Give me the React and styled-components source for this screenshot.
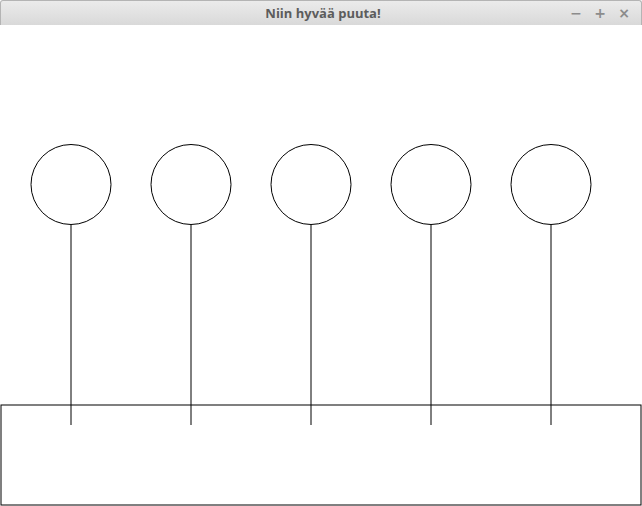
import React from 'react';
import styled, { createGlobalStyle } from 'styled-components';

const GlobalStyle = createGlobalStyle`
    html, body {
        margin: 0;
        padding: 0;
        background: #ffffff;
    }
`;

const trees = [71, 191, 311, 431, 551];

const App = () => {
    return (
        <>
            <GlobalStyle />
            <Window>
                <TitleBar>
                    <Title>Niin hyvää puuta!</Title>
                    <Controls>
                        <ControlButton>&#8722;</ControlButton>
                        <ControlButton>+</ControlButton>
                        <ControlButton>&#215;</ControlButton>
                    </Controls>
                </TitleBar>
                <Canvas>
                    <svg width="642" height="481" viewBox="0 0 642 481">
                        {/* ground */}
                        <rect
                            x="1"
                            y="380"
                            width="640"
                            height="100"
                            fill="none"
                            stroke="#000"
                            strokeWidth="1"
                        />
                        {/* trees */}
                        {trees.map((x) => (
                            <g key={x}>
                                <line
                                    x1={x}
                                    y1="200"
                                    x2={x}
                                    y2="400"
                                    stroke="#000"
                                    strokeWidth="1"
                                />
                                <circle
                                    cx={x}
                                    cy="159.5"
                                    r="40"
                                    fill="#fff"
                                    stroke="#000"
                                    strokeWidth="1"
                                />
                            </g>
                        ))}
                    </svg>
                </Canvas>
            </Window>
        </>
    );
};

const Window = styled.div`
    width: 642px;
    height: 506px;
    display: flex;
    flex-direction: column;
    background: #ffffff;
    overflow: hidden;
`;

const TitleBar = styled.div`
    height: 24px;
    flex-shrink: 0;
    display: flex;
    align-items: center;
    justify-content: center;
    position: relative;
    border: 1px solid #b4b4b4;
    border-bottom: none;
    border-radius: 3px 3px 0 0;
    background: linear-gradient(#ebebeb, #d9d9d9);
`;

const Title = styled.div`
    font-family: 'Open Sans', 'DejaVu Sans', sans-serif;
    font-weight: 700;
    font-size: 13px;
    color: #5c5c5c;
    padding-left: 4px;
`;

const Controls = styled.div`
    position: absolute;
    right: 9px;
    top: 0;
    height: 100%;
    display: flex;
    align-items: center;
    gap: 8px;
`;

const ControlButton = styled.span`
    width: 16px;
    text-align: center;
    font-family: 'DejaVu Sans', sans-serif;
    font-weight: 700;
    font-size: 14px;
    color: #8c8c8c;
`;

const Canvas = styled.div`
    flex: 1;
    line-height: 0;
    svg {
        display: block;
    }
`;

export default App;
